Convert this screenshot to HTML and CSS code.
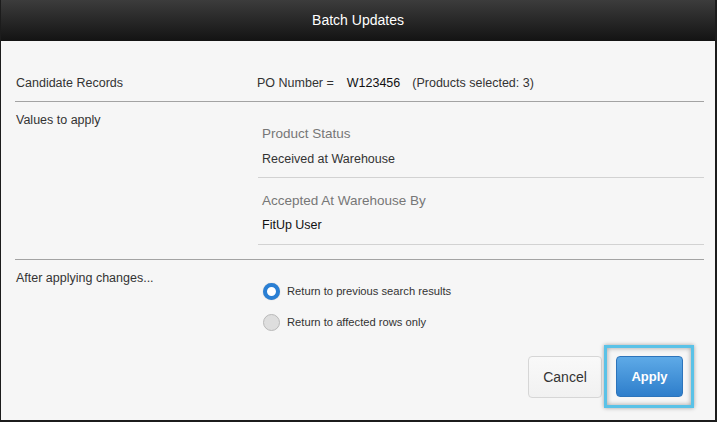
FILE: index.html
```html
<!DOCTYPE html>
<html>
<head>
<meta charset="utf-8">
<link rel="stylesheet" href="styles.css">
</head>
<body>
<div class="dialog">
  <div class="header">Batch Updates</div>
  <div class="content">
    <div class="row row-candidates">
      <div class="label">Candidate Records</div>
      <div class="po">PO Number =<span class="po-num">W123456</span><span class="po-count">(Products selected: 3)</span></div>
    </div>
    <div class="row row-values">
      <div class="label">Values to apply</div>
      <div class="fields">
        <div class="field">
          <div class="field-label">Product Status</div>
          <div class="field-value">Received at Warehouse</div>
        </div>
        <div class="field">
          <div class="field-label">Accepted At Warehouse By</div>
          <div class="field-value dark">FitUp User</div>
        </div>
      </div>
    </div>
    <div class="row row-after">
      <div class="label">After applying changes...</div>
      <div class="radios">
        <div class="radio-row"><span class="radio checked"></span><span class="radio-label">Return to previous search results</span></div>
        <div class="radio-row"><span class="radio"></span><span class="radio-label">Return to affected rows only</span></div>
      </div>
    </div>
    <div class="footer">
      <button class="btn btn-cancel">Cancel</button>
      <span class="focus-ring"><button class="btn btn-apply">Apply</button></span>
    </div>
  </div>
</div>
</body>
</html>
```
FILE: styles.css
```css
html, body {
  margin: 0;
  padding: 0;
  background: #f6f6f6;
}
.dialog {
  width: 717px;
  height: 422px;
  box-sizing: border-box;
  border-left: 1px solid #1c1c1c;
  border-right: 2px solid #1c1c1c;
  border-bottom: 2px solid #1c1c1c;
  background: #f6f6f6;
  display: flex;
  flex-direction: column;
  font-family: "Liberation Sans", Arial, sans-serif;
  color: #333;
}
.header {
  height: 41px;
  flex: none;
  background: linear-gradient(#3c3c3c, #131313);
  color: #fff;
  font-size: 14px;
  display: flex;
  align-items: center;
  justify-content: center;
  padding-bottom: 1px;
  box-sizing: border-box;
}
.content {
  flex: 1;
  display: flex;
  flex-direction: column;
  padding: 0 11px 0 14px;
}
.row {
  display: grid;
  grid-template-columns: 242px 1fr;
  font-size: 12.5px;
  line-height: 16px;
}
.row-candidates {
  padding: 34px 0 10px;
  border-bottom: 1px solid #a3a3a3;
}
.label {
  padding-left: 1px;
}
.po-num {
  color: #111;
  margin-left: 13px;
  margin-right: 12px;
}
.row-values {
  padding: 10px 0 14px;
  border-bottom: 1px solid #a3a3a3;
}
.fields {
  margin-left: 1px;
}
.field {
  padding: 14px 0 10px 4px;
  border-bottom: 1px solid #d2d2d2;
}
.field + .field {
  padding-top: 15px;
  padding-bottom: 11px;
}
.field-label {
  font-size: 13.5px;
  color: #777;
  line-height: 16px;
  margin-bottom: 9px;
}
.field + .field .field-label {
  margin-bottom: 8px;
}
.field-value {
  color: #333;
}
.field-value.dark {
  color: #111;
}
.row-after {
  padding-top: 10px;
}
.radios {
  padding-top: 11px;
  padding-left: 6px;
  display: flex;
  flex-direction: column;
  gap: 11px;
}
.radio-row {
  display: flex;
  align-items: center;
  height: 20px;
  gap: 7px;
  font-size: 11.2px;
}
.radio {
  width: 17px;
  height: 17px;
  box-sizing: border-box;
  border-radius: 50%;
  border: 1px solid #b9b9b9;
  background: #dedede;
  flex: none;
}
.radio.checked {
  border: 4px solid #2a7fd4;
  background: #fff;
  box-shadow: 0 0 1px rgba(0, 0, 0, 0.3);
}
.radio-label {
  color: #333;
}
.footer {
  margin-top: auto;
  display: flex;
  justify-content: flex-end;
  align-items: center;
  padding: 0 10px 12px 0;
}
.btn {
  font-family: "Liberation Sans", Arial, sans-serif;
  height: 42px;
  border-radius: 4px;
  box-sizing: border-box;
  cursor: pointer;
}
.btn-cancel {
  width: 74px;
  font-size: 14px;
  color: #333;
  background: linear-gradient(#f9f9f9, #f1f1f1);
  border: 1px solid #d6d6d6;
  margin-right: 2px;
}
.focus-ring {
  display: inline-flex;
  border: 3px solid #5ac2e7;
  padding: 8px 8px 8px 9px;
  box-shadow: inset 0 0 5px rgba(0, 0, 0, 0.35), 0 0 4px rgba(0, 0, 0, 0.35);
}
.btn-apply {
  width: 67px;
  height: 41px;
  font-size: 13px;
  font-weight: bold;
  color: #fff;
  background: linear-gradient(#5eaae7, #2e7ecb);
  border: 1px solid #2c74bb;
}
```
